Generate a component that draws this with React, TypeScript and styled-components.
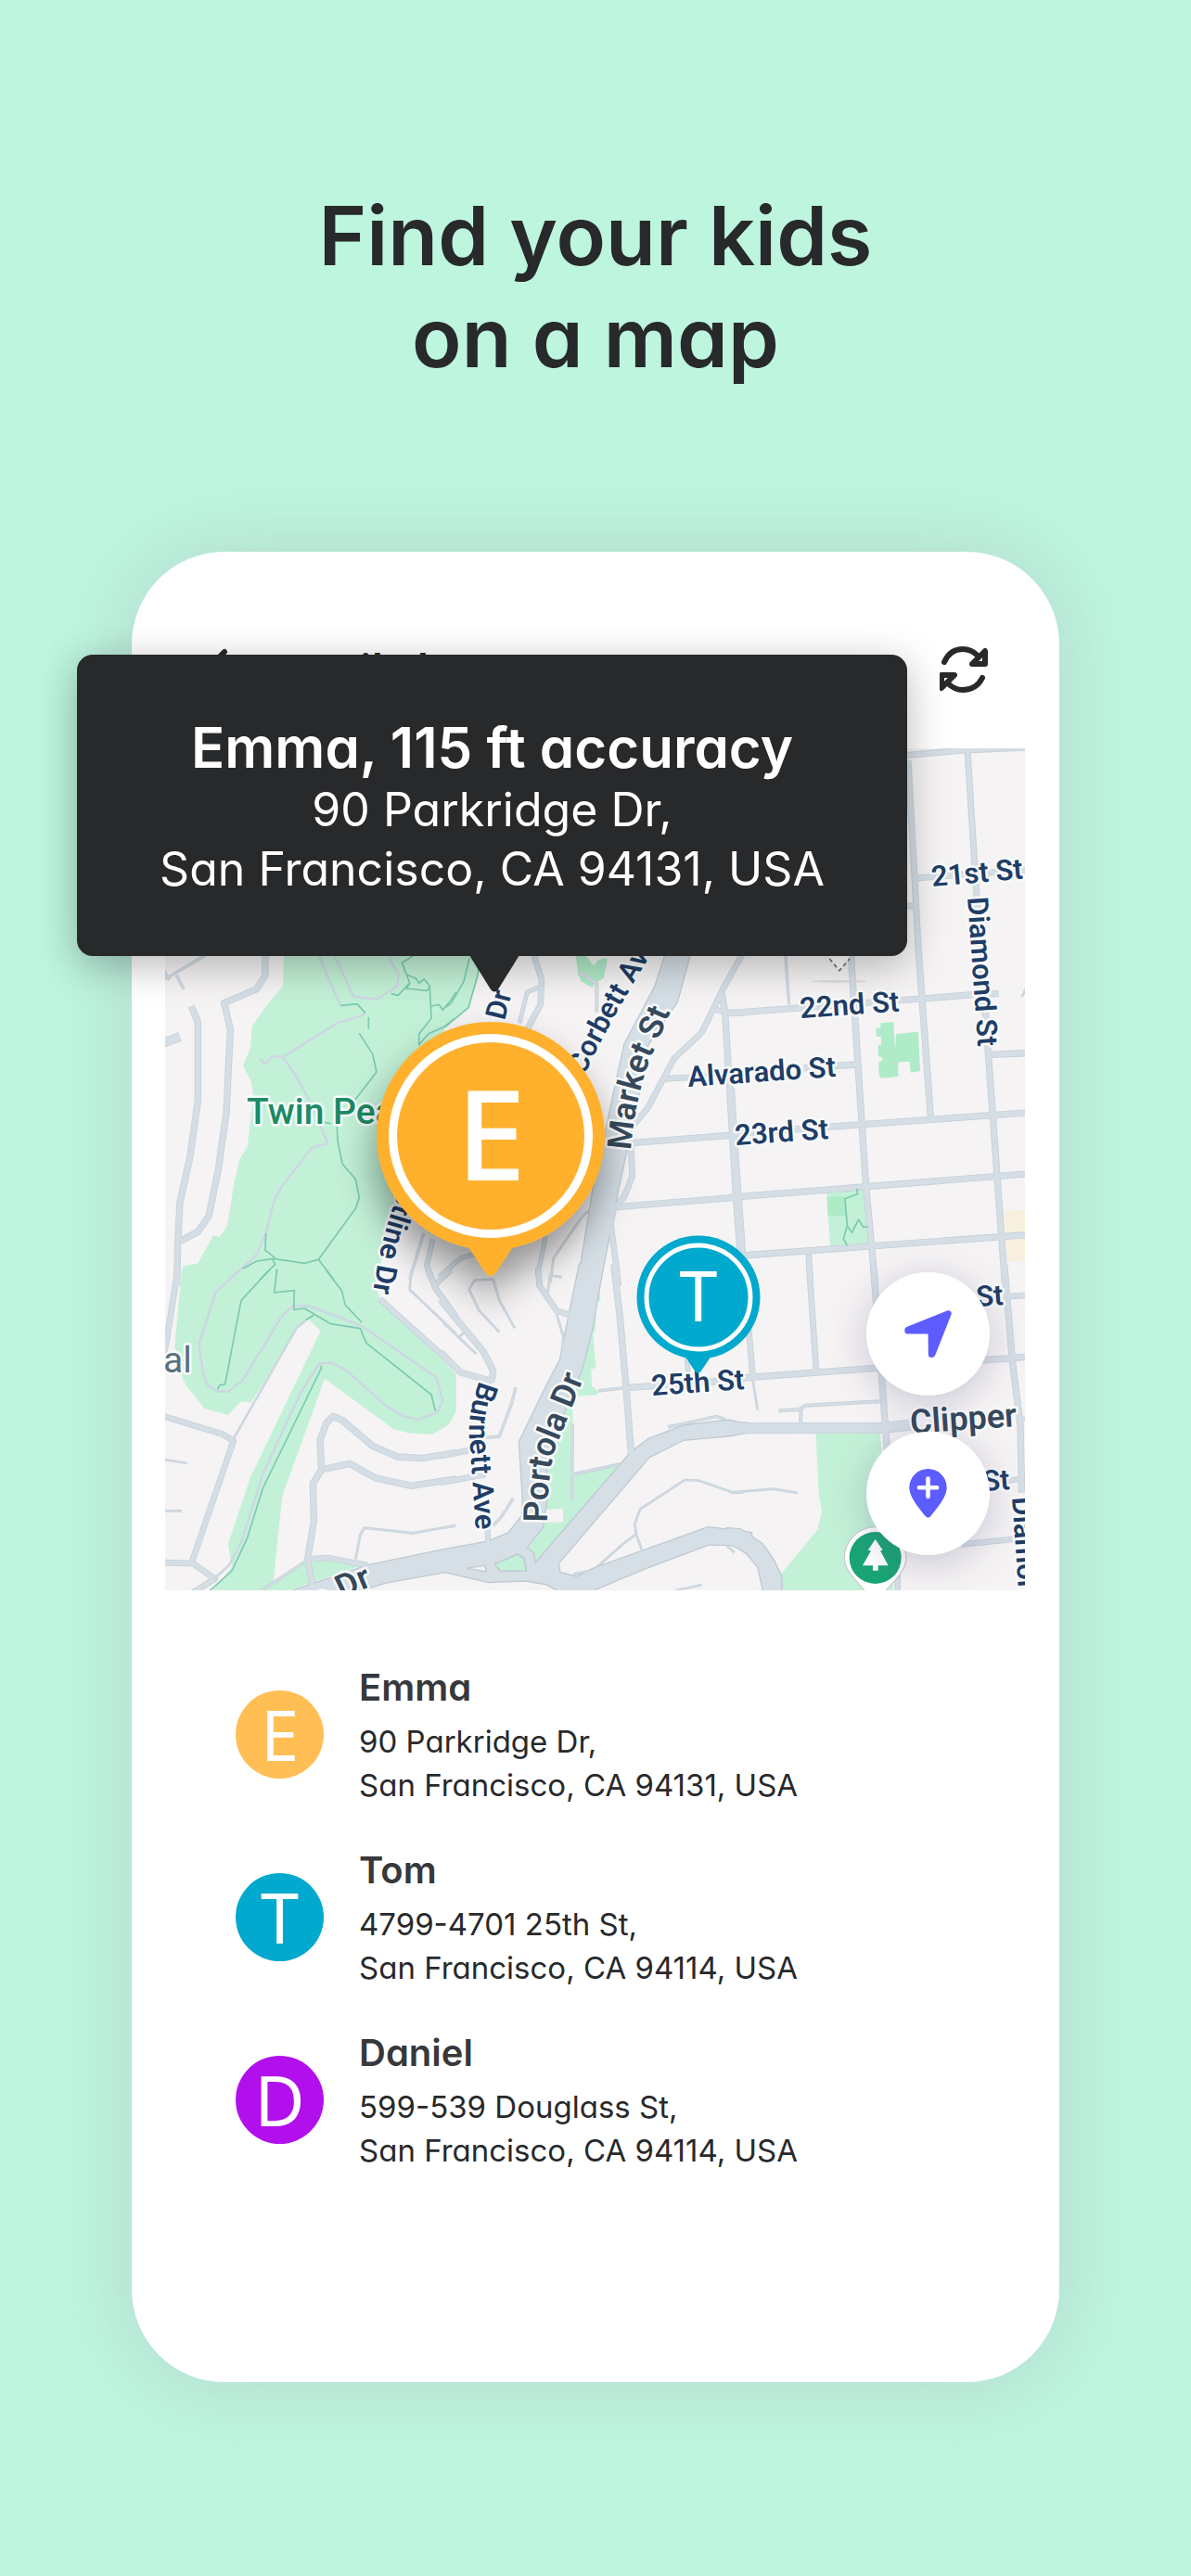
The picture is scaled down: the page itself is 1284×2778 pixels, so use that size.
import React from "react";
import styled, { createGlobalStyle } from "styled-components";

const GlobalStyle = createGlobalStyle`
  * { box-sizing: border-box; }
  body {
    margin: 0;
    background: #bdf5df;
    color: #28292b;
    font-family: Inter, "Noto Sans", sans-serif;
    font-feature-settings: "cv11";
  }
  h1, h2, h3, p, ul { margin: 0; padding: 0; }
  button { border: 0; padding: 0; background: none; cursor: pointer; }
`;

const Page = styled.main`
  display: flex;
  flex-direction: column;
  align-items: center;
  gap: 176px;
  padding: 199px 0 211px;
`;

const Headline = styled.h1`
  font-size: 88px;
  line-height: 110px;
  font-weight: 600;
  text-align: center;
`;

const Phone = styled.section`
  position: relative;
  display: flex;
  flex-direction: column;
  width: calc(100% - 284px);
  padding: 0 37px 226px 36px;
  border-radius: 100px;
  background: #fff;
  box-shadow: 0 0 80px rgba(170, 180, 180, 0.45);
`;

const TopBar = styled.header`
  display: flex;
  align-items: center;
  gap: 12px;
  height: 212px;
  padding: 44px 36px 0 48px;
`;

const IconButton = styled.button`
  display: flex;
  width: 56px;
  height: 56px;
  color: #28292b;
`;

const ScreenTitle = styled.h2`
  flex: 1;
  padding-bottom: 4px;
  font-family: "Noto Sans", sans-serif;
  font-size: 45px;
  line-height: 56px;
  font-weight: 600;
`;

const MapFrame = styled.div`
  position: relative;
  overflow: hidden;
  background: #f5f3f4;
`;

const MapDrawing = styled.svg`
  display: block;
  width: 100%;
  height: auto;
  font-family: Roboto, sans-serif;
  font-weight: 600;
`;

const MapControls = styled.div`
  position: absolute;
  right: 38px;
  bottom: 38px;
  display: flex;
  flex-direction: column;
  gap: 39px;
`;

const MapButton = styled.button`
  display: flex;
  align-items: center;
  justify-content: center;
  width: 133px;
  height: 133px;
  border-radius: 50%;
  background: #fff;
  box-shadow: 0 8px 40px rgba(70, 60, 120, 0.25);
`;

const Pin = styled.div<{ $color: string; $size: number; $ring: number; $inset: number; $x: string; $y: string; $font: number; $shadow?: boolean; $weight: number }>`
  position: absolute;
  left: ${(p) => p.$x};
  top: ${(p) => p.$y};
  display: flex;
  width: ${(p) => p.$size}px;
  height: ${(p) => p.$size}px;
  padding: ${(p) => p.$inset}px;
  border-radius: 50%;
  background: ${(p) => p.$color};
  filter: ${(p) => (p.$shadow ? "drop-shadow(-2px 24px 20px rgba(0, 0, 0, 0.4))" : "none")};
  transform: translate(-50%, -50%);

  span {
    flex: 1;
    display: flex;
    align-items: center;
    justify-content: center;
    padding-bottom: 6px;
    border: ${(p) => p.$ring}px solid #fff;
    border-radius: 50%;
    color: #fff;
    font-family: "Noto Sans", sans-serif;
    font-size: ${(p) => p.$font}px;
    font-weight: ${(p) => p.$weight};
    line-height: 1;
  }

  svg {
    position: absolute;
    left: 50%;
    top: 96%;
    width: 26%;
    transform: translateX(-50%);
  }
`;

const Callout = styled.div`
  position: absolute;
  z-index: 2;
  top: 111px;
  left: -59px;
  right: 164px;
  padding: 65px 16px 62px;
  border-radius: 17px;
  background: #28292b;
  color: #fff;
  text-align: center;
  box-shadow: 0 10px 44px rgba(0, 0, 0, 0.28);

  svg {
    position: absolute;
    top: calc(100% - 1px);
    left: calc(50% + 2px);
    width: 54px;
    height: 40px;
    transform: translateX(-50%);
  }
`;

const CalloutTitle = styled.h3`
  font-size: 60px;
  line-height: 70px;
  font-weight: 600;
`;

const CalloutText = styled.p`
  font-size: 50px;
  line-height: 64px;
  font-weight: 400;
`;

const KidList = styled.ul`
  display: flex;
  flex-direction: column;
  gap: 40px;
  padding: 77px 0 0 76px;
  list-style: none;
`;

const Kid = styled.li`
  display: flex;
  align-items: center;
  gap: 38px;
`;

const Avatar = styled.span<{ $color: string }>`
  display: flex;
  align-items: center;
  justify-content: center;
  width: 95px;
  height: 95px;
  border-radius: 50%;
  background: ${(p) => p.$color};
  color: #fff;
  font-family: "Noto Sans", sans-serif;
  font-size: 74px;
  line-height: 1;
`;

const KidName = styled.h3`
  margin-bottom: 7px;
  font-size: 40px;
  line-height: 56px;
  font-weight: 600;
  color: #37383c;
`;

const KidAddress = styled.p`
  font-size: 33px;
  line-height: 47px;
`;

type Road = [number, string];
type Tile = {
  at: [number, number];
  parks?: string[];
  lawns?: string[];
  sand?: string[];
  roads?: Road[];
  avenues?: string[];
  cutouts?: string[];
  parkRoads?: string[];
  trails?: string[];
};

// Each tile is drawn at three units per map pixel.
const tiles: Tile[] = [
  {
    at: [170, 1020],
    parks: [
      "M408,0 L408,33 405,130 355,190 305,260 300,330 276,388 300,435 310,480 290,650 265,690 245,780 225,905 200,943 180,937 130,1028 82,1035 75,1110 L700,1110 740,950 790,800 850,500 930,265 1005,200 1040,90 1045,0Z",
    ],
    roads: [
      [20, "M348,0 V95 L320,140 215,185 L235,270 222,540 195,730 165,875 130,925 75,955"],
      [20, "M108,195 L130,245 V500 L105,680 72,830 65,960 62,1100"],
      [8, "M20,110 L155,30"],
      [8, "M60,95 L85,140"],
      [8, "M20,80 L38,110"],
      [28, "M10,318 L72,294"],
      [16, "M890,950 L870,1035 890,1090"],
      [8, "M860,930 L815,1080"],
      [14, "M895,1100 L965,1020"],
    ],
    parkRoads: [
      "M570,30 L635,165 710,172 775,130 780,95 745,30",
      "M670,222 L580,250 405,360 L370,358 348,382 330,365",
      "M405,360 L450,425 490,500 530,590 550,640 500,652 400,780 375,830 350,930 320,1000 230,1080",
      "M520,30 L592,195",
    ],
    trails: [
      "M592,193 L645,188 672,218 M682,230 V270 M652,283 L695,350 708,408 637,500 M530,570 L560,575",
      "M580,585 L582,630 597,705 640,755 652,815 640,850 520,1015 475,1027 375,1012 320,1020 275,1045",
      "M350,930 L348,985 380,1010 M520,1015 L570,1080 M330,1080 L380,1030 370,1012 M385,1045 V1060",
      "M825,33 L790,55 815,120 805,138 872,145 880,130 862,108 845,120 835,105 805,93 M755,155 L778,160 815,120",
      "M880,130 L885,235 845,285 845,320 L875,285 930,260 960,235 M885,195 L910,190 922,208 945,180 965,150",
    ],
  },
  {
    at: [480, 1020],
    lawns: [
      "M418,0 L430,95 440,115 475,135 485,120 512,105 522,60 524,38 495,45 480,65 462,40 455,33 450,0Z",
    ],
    roads: [
      [18, "M285,25 L312,110 308,190 255,290"],
      [12, "M300,135 L265,150 240,250"],
      [10, "M435,85 L490,122 V215"],
      [18, "M965,20 L895,145 830,280 740,365 700,440 655,525 600,590"],
      [20, "M893,150 L905,215 940,800 960,1080"],
      [18, "M870,205 L905,215 970,217"],
      [8, "M890,150 L872,205"],
      [18, "M710,430 L930,418"],
      [20, "M600,638 L935,612"],
      [20, "M555,845 L965,812"],
      [18, "M600,640 L605,745 580,810 545,850 535,900 555,1050 560,1100"],
      [6, "M470,850 L440,880 350,1010 340,1090"],
      [14, "M325,940 L300,1060 305,1090"],
      [14, "M-20,1070 L50,1010 150,985"],
    ],
    avenues: [
      "M735,-40 L680,130 580,320 545,480 520,600 480,780 425,1120 L495,1120 560,780 600,600 625,480 655,320 750,180 810,-40Z",
    ],
    trails: ["M110,40 L105,95 75,200 0,262 M78,40 L60,115 20,185 0,200"],
  },
  {
    at: [790, 1020],
    parks: ["M304,798 L425,785 440,962 315,972Z"],
    lawns: [
      "M478,250 L520,247 525,340 528,285 600,278 606,405 575,410 572,375 535,376 535,423 480,428 473,420 472,375 484,372 482,360 471,358 470,322 480,320 479,295 465,293 463,267 478,265Z",
      "M304,812 L362,810 365,872 308,875Z",
    ],
    sand: ["M878,858 L950,853 950,1020 888,1022Z"],
    roads: [
      [20, "M-10,218 L780,158 860,155"],
      [20, "M598,-20 L640,555"],
      [20, "M382,25 L395,230 430,770 460,1090"],
      [8, "M170,25 L182,190"],
      [20, "M230,395 L400,384"],
      [20, "M0,608 L950,540"],
      [20, "M835,352 L950,347"],
      [20, "M817,200 L825,330 880,1090"],
      [20, "M-10,814 L950,738"],
      [20, "M-5,460 L10,700 32,1000"],
      [20, "M30,1002 L950,935"],
      [18, "M245,995 L252,1090"],
      [6, "M935,165 L955,125"],
    ],
    trails: [
      "M402,785 L403,803 363,818 370,905 358,948 370,970 M370,905 L385,928 407,885 422,910 438,909",
    ],
  },
  {
    at: [170, 1370],
    parks: [
      "M78,0 L55,245 80,345 90,370 152,447 228,468 270,423 302,428 420,240 450,190 490,160 527,195 300,670 228,885 240,960 170,1045 L370,1045 403,730 540,350 765,515 818,527 888,530 940,500 965,455 965,335 930,300 720,95 690,0Z",
      "M330,1045 L475,945 550,938 650,958 400,1045Z",
    ],
    roads: [
      [18, "M66,-10 L30,220 20,270"],
      [18, "M20,472 L210,530 245,552 110,945 185,998 110,1045"],
      [18, "M20,945 L110,948"],
      [20, "M505,1045 L485,935 505,810 502,690 530,645 525,550 545,495 567,472 597,485 695,568 775,603 855,608 965,590"],
      [20, "M530,645 L620,625 705,672 820,697 965,675"],
      [18, "M485,935 L550,930 680,955"],
      [8, "M330,1040 L480,940"],
      [6, "M640,935 L655,855 668,833 825,850 965,825"],
      [6, "M20,612 L95,624 M20,778 H78"],
      [18, "M718,92 L965,315"],
      [6, "M820,0 L815,62 965,205"],
      [18, "M872,-10 L900,60 965,150"],
      [14, "M895,50 L950,0"],
    ],
    parkRoads: [
      "M265,0 L188,70 133,240 148,340 160,370 195,392 228,392 275,355 400,150 435,115 490,115 660,180 900,345 922,420 905,460 842,483 795,472 740,440 610,323 560,298 522,302 460,400 340,660 270,880 230,955 180,1000",
      "M480,160 L450,185 245,545",
    ],
    trails: [
      "M360,0 L270,97 218,368 200,372 194,385 M385,0 L377,72 442,65 440,127 475,123 560,173 655,188 675,235 885,402 898,455",
      "M545,0 L595,65 607,112 660,168 M480,160 L505,145",
      "M528,308 L530,315 340,705 290,865 240,972 165,1040",
    ],
  },
  {
    at: [480, 1370],
    parks: [
      "M500,60 L502,100 490,100 485,195 478,200 487,315 472,320 474,375 493,390 492,403 412,407 412,660 565,625 300,965 255,897 315,815 382,815 380,770 320,775 320,600 430,325 470,190Z",
      "M-10,290 L35,335 35,455 10,500 -10,510Z",
    ],
    roads: [
      [18, "M300,-10 L305,50 360,130 405,145"],
      [6, "M360,140 L382,215 378,280 M335,15 L378,22 M340,10 L330,85"],
      [6, "M175,200 L110,130 77,62 95,32 155,28 175,97 225,187"],
      [20, "M-15,95 L125,265 155,325 150,360"],
      [20, "M-15,265 L50,330 155,360"],
      [6, "M-5,170 L100,270 M45,215 L62,200"],
      [8, "M228,378 L215,430 175,537 110,543"],
      [18, "M-15,600 L75,583"],
      [18, "M-15,687 L130,660"],
      [8, "M220,738 L180,800 155,825"],
      [6, "M-10,834 L28,828"],
      [16, "M137,800 L138,890"],
      [8, "M495,390 L580,380"],
      [20, "M545,-20 L565,150 585,380 602,600"],
      [20, "M585,380 L965,353"],
      [14, "M780,270 L787,350"],
      [8, "M412,660 L565,627 M412,495 L410,745"],
      [8, "M720,507 L875,473 905,480"],
      [6, "M965,718 L935,720 820,680 775,678 630,773 613,820 618,855 640,915"],
      [6, "M618,853 L575,885 480,970 415,983"],
      [6, "M905,885 L935,913 M745,1036 L830,1017"],
    ],
    avenues: [
      "M435,-20 L400,150 372,290 330,370 240,555 252,740 248,795 205,850 140,878 0,903 -250,955 -560,1060 -350,1060 -195,1010 0,975 140,1008 260,1003 330,1015 400,1060 420,1060 560,1000 650,962 850,887 925,887 990,915 990,850 950,843 850,832 480,965 425,992 370,978 365,948 660,603 770,548 915,535 980,523 980,495 950,493 915,485 770,503 660,545 600,590 290,950 285,915 262,897 315,830 328,740 325,600 400,420 440,325 475,190 510,-20Z",
    ],
    cutouts: ["M70,963 L128,955 133,975Z"],
  },
  {
    at: [790, 1370],
    parks: [
      "M268,515 L475,515 482,590 500,800 520,1045 L150,1045 150,990 275,838 288,780 278,720Z",
    ],
    roads: [
      [18, "M247,-10 L270,325"],
      [20, "M455,-10 L500,590"],
      [20, "M30,348 L950,280"],
      [18, "M48,150 L65,345"],
      [6, "M65,355 L80,452"],
      [10, "M148,454 L215,450 235,437 475,424 M220,448 V495"],
      [34, "M-15,507 L10,511 490,509 600,497"],
      [20, "M878,-20 L905,300 930,500 935,720"],
      [18, "M880,85 L950,80"],
      [6, "M-10,719 L130,707 210,720"],
      [18, "M740,886 L905,870"],
      [16, "M890,680 L930,675"],
      [14, "M920,485 L950,480"],
      [18, "M533,900 V1045"],
    ],
    avenues: [
      "M-20,835 L25,838 95,885 130,935 157,990 157,1060 105,1060 82,960 45,915 0,887 -20,887Z",
    ],
  },
];

const upperRoads: [number, string][] = [
  [6, "M970,815 L1040,809 1110,806"],
  [6, "M1043,810 L1053,967 1062,1095"],
  [6, "M979,820 L990,1020"],
  [6, "M970,977 H986"],
  [6, "M986,947 L1110,938"],
];

const tileTransform = (t: Tile) => `translate(${t.at[0]} ${t.at[1]}) scale(0.33333)`;

const layer = (draw: (t: Tile) => React.ReactNode) =>
  tiles.map((t, i) => (
    <g key={i} transform={tileTransform(t)}>
      {draw(t)}
    </g>
  ));

const straightLabels: { text: string; x: number; y: number; turn: number; major?: boolean }[] = [
  { text: "21st St", x: 1005, y: 956, turn: -5 },
  { text: "Diamond St", x: 1043, y: 968, turn: 86 },
  { text: "22nd St", x: 863, y: 1098, turn: -4 },
  { text: "Alvarado St", x: 742, y: 1172, turn: -4 },
  { text: "23rd St", x: 793, y: 1235, turn: -4 },
  { text: "25th St", x: 703, y: 1505, turn: -4 },
  { text: "St", x: 1053, y: 1409, turn: -4 },
  { text: "St", x: 1060, y: 1608, turn: -4 },
  { text: "Clipper", x: 982, y: 1546, turn: -4, major: true },
  { text: "Diamond St", x: 1091, y: 1615, turn: 86 },
  { text: "Dr", x: 544, y: 1101, turn: -76 },
];

const curvedLabels: { id: string; text: string; path: string; major?: boolean; end?: boolean }[] = [
  { id: "burnett", text: "Burnett Ave", path: "M517,1489 Q502,1527 507,1562 L515,1680" },
  { id: "portola", text: "Portola Dr", path: "M590,1642 Q590,1594 598,1564 Q610,1534 634,1474", major: true },
  { id: "market", text: "Market St", path: "M680,1241 Q685,1182 701,1142 L731,1072", major: true },
  { id: "corbett", text: "Corbett Ave", path: "M630,1160 Q658,1098 720,1000" },
  { id: "crestline", text: "Crestline Dr", path: "M466,1200 Q415,1300 402,1394", end: true },
  { id: "portola-south", text: "Portola Dr", path: "M240,1820 Q330,1738 402,1710", major: true, end: true },
];

const labelColor = (major?: boolean) => (major ? "#36495b" : "#1f3d66");

function StreetMap() {
  return (
    <MapDrawing viewBox="178 807 927 908" role="img" aria-label="Map of Twin Peaks and Noe Valley">
      <rect x="178" y="807" width="928" height="908" fill="#f5f3f4" />
      {layer((t) => (
        <>
          {t.parks?.map((d) => <path key={d} d={d} fill="#c3f1d7" />)}
          {t.lawns?.map((d) => <path key={d} d={d} fill="#b0ebc8" />)}
          {t.sand?.map((d) => <path key={d} d={d} fill="#f7f0de" />)}
        </>
      ))}
      <g fill="none" strokeLinejoin="round">
        {layer((t) => (
          <>
            {t.roads?.map(([w, d]) => <path key={d} d={d} stroke="#c6d1da" strokeWidth={w + 2} />)}
            {t.avenues?.map((d) => <path key={d} d={d} stroke="#bfcad2" strokeWidth="8" />)}
          </>
        ))}
        {upperRoads.map(([w, d]) => <path key={d} d={d} stroke="#c6d1da" strokeWidth={w + 1} />)}
        {layer((t) => (
          <>
            {t.roads?.map(([w, d]) => <path key={d} d={d} stroke="#d5dee5" strokeWidth={w - 3} />)}
            {t.avenues?.map((d) => <path key={d} d={d} fill="#d6dfe6" />)}
            {t.cutouts?.map((d) => <path key={d} d={d} fill="#f5f3f4" stroke="#bfcad2" strokeWidth="4" />)}
            {t.parkRoads?.map((d) => <path key={d} d={d} stroke="#ccd8e2" strokeWidth="8" />)}
            {t.trails?.map((d) => <path key={d} d={d} stroke="#7cc9b0" strokeWidth="5" />)}
          </>
        ))}
        {upperRoads.map(([w, d]) => <path key={d} d={d} stroke="#d5dee5" strokeWidth={w - 1} />)}
      </g>
      <g transform="translate(480 1370) scale(0.33333)">
        <path d="M160,950 L235,918 255,933 262,972 178,973Z" fill="#c3f1d7" stroke="#bfcad2" strokeWidth="5" />
      </g>
      <g transform="translate(790 1020) scale(0.33333)">
        <path d="M305,25 L345,80 385,25Z" fill="#fff" />
        <path d="M313,42 L345,80 378,42" fill="none" stroke="#6d6d6d" strokeWidth="5" strokeDasharray="13 10" />
        <ellipse cx="343" cy="115" rx="90" ry="4" fill="#dcdadb" />
      </g>
      <g transform="translate(790 1370) scale(0.33333)">
        <path d="M361,930 A100,100 0 1 1 561,930 C561,985 500,1015 461,1085 C422,1015 361,985 361,930Z" fill="#fff" stroke="#c9cfcf" strokeWidth="4" />
        <circle cx="461" cy="930" r="84" fill="#1aa574" />
        <path d="M461,870 L485,905 477,907 503,955 470,955 470,971 453,971 453,955 420,955 447,907 437,905Z" fill="#fff" />
      </g>
      <g stroke="#f8fafb" strokeWidth="5" strokeLinejoin="round" paintOrder="stroke">
        {straightLabels.map((l) => (
          <text
            key={`${l.text}-${l.y}`}
            transform={`translate(${l.x} ${l.y}) rotate(${l.turn})`}
            fontSize={l.major ? 36 : 31}
            fill={labelColor(l.major)}
          >
            {l.text}
          </text>
        ))}
        {curvedLabels.map((l) => (
          <React.Fragment key={l.id}>
            <path id={l.id} d={l.path} fill="none" stroke="none" />
            <text fontSize={l.major ? 36 : 31} fill={labelColor(l.major)} textAnchor={l.end ? "end" : "start"}>
              <textPath href={`#${l.id}`} startOffset={l.end ? "100%" : "0%"}>
                {l.text}
              </textPath>
            </text>
          </React.Fragment>
        ))}
        <text x="266" y="1212" fontSize="39" fontWeight="500" fill="#1c8a62">Twin Peaks</text>
        <text x="176" y="1480" fontSize="39" fontWeight="400" fill="#56717f">al</text>
      </g>
    </MapDrawing>
  );
}

const Tail = ({ color }: { color: string }) => (
  <svg viewBox="0 0 64 44" aria-hidden="true">
    <path d="M0,0 Q4,2 8,7 L26,34 Q32,42 38,34 L56,7 Q60,2 64,0Z" fill={color} />
  </svg>
);

const RefreshIcon = () => (
  <svg viewBox="3 0 56 56" width="56" height="56" fill="none" stroke="currentColor" strokeWidth="6" strokeLinecap="round" strokeLinejoin="round" aria-hidden="true">
    <path d="M8,19 C12,10 19,5 28,5 C34,5 39,7 44,12" />
    <path d="M52,7 V21 H38Z" />
    <path d="M49,36 C45,44 38,49 28,49 C22,49 17,47 12,42" />
    <path d="M5,47 V33 H19Z" />
  </svg>
);

const BackIcon = () => (
  <svg viewBox="0 0 56 56" width="56" height="56" fill="none" stroke="currentColor" strokeWidth="6" strokeLinecap="round" strokeLinejoin="round" aria-hidden="true">
    <path d="M16,8 L-4,28 16,48" />
  </svg>
);

const LocateIcon = () => (
  <svg viewBox="551 128 160 160" width="53" height="53" aria-hidden="true">
    <path d="M697,142 L565,195 565,198 641,198 642,275 645,274Z" fill="#5d5cff" stroke="#5d5cff" strokeWidth="20" strokeLinejoin="round" />
  </svg>
);

const AddPlaceIcon = () => (
  <svg viewBox="551 642 160 160" width="53" height="53" aria-hidden="true">
    <path d="M570,703 A61,61 0 1 1 692,703 C692,733 662,768 639,797 Q631,806 623,797 C600,768 570,733 570,703Z" fill="#5d5cff" />
    <path d="M602,703 H660 M631,674 V732" stroke="#fff" strokeWidth="14" strokeLinecap="round" />
  </svg>
);

const kids = [
  { name: "Emma", initial: "E", color: "#ffbf55", street: "90 Parkridge Dr,", city: "San Francisco, CA 94131, USA" },
  { name: "Tom", initial: "T", color: "#00a9cd", street: "4799-4701 25th St,", city: "San Francisco, CA 94114, USA" },
  { name: "Daniel", initial: "D", color: "#b10fec", street: "599-539 Douglass St,", city: "San Francisco, CA 94114, USA" },
];

export default function App() {
  return (
    <>
      <GlobalStyle />
      <Page>
        <Headline>
          Find your kids
          <br />
          on a map
        </Headline>
        <Phone>
          <TopBar>
            <IconButton type="button" aria-label="Back">
              <BackIcon />
            </IconButton>
            <ScreenTitle>Family locator</ScreenTitle>
            <IconButton type="button" aria-label="Refresh">
              <RefreshIcon />
            </IconButton>
          </TopBar>
          <MapFrame>
            <StreetMap />
            <Pin $color="#00a9cd" $size={133} $ring={5} $inset={8} $x="62%" $y="65.2%" $font={74} $weight={400}>
              <Tail color="#00a9cd" />
              <span>T</span>
            </Pin>
            <Pin $color="#ffb12e" $size={246} $ring={9} $inset={13} $x="37.9%" $y="46%" $font={135} $weight={500} $shadow>
              <Tail color="#ffb12e" />
              <span>E</span>
            </Pin>
            <MapControls>
              <MapButton type="button" aria-label="My location">
                <LocateIcon />
              </MapButton>
              <MapButton type="button" aria-label="Add place">
                <AddPlaceIcon />
              </MapButton>
            </MapControls>
          </MapFrame>
          <KidList>
            {kids.map((kid) => (
              <Kid key={kid.name}>
                <Avatar $color={kid.color}>{kid.initial}</Avatar>
                <div>
                  <KidName>{kid.name}</KidName>
                  <KidAddress>
                    {kid.street}
                    <br />
                    {kid.city}
                  </KidAddress>
                </div>
              </Kid>
            ))}
          </KidList>
          <Callout role="tooltip">
            <CalloutTitle>Emma, 115 ft accuracy</CalloutTitle>
            <CalloutText>
              90 Parkridge Dr,
              <br />
              San Francisco, CA 94131, USA
            </CalloutText>
            <svg viewBox="0 0 54 40" aria-hidden="true">
              <path d="M0,0 H54 L31,37 Q27,42 23,37Z" fill="#28292b" />
            </svg>
          </Callout>
        </Phone>
      </Page>
    </>
  );
}
